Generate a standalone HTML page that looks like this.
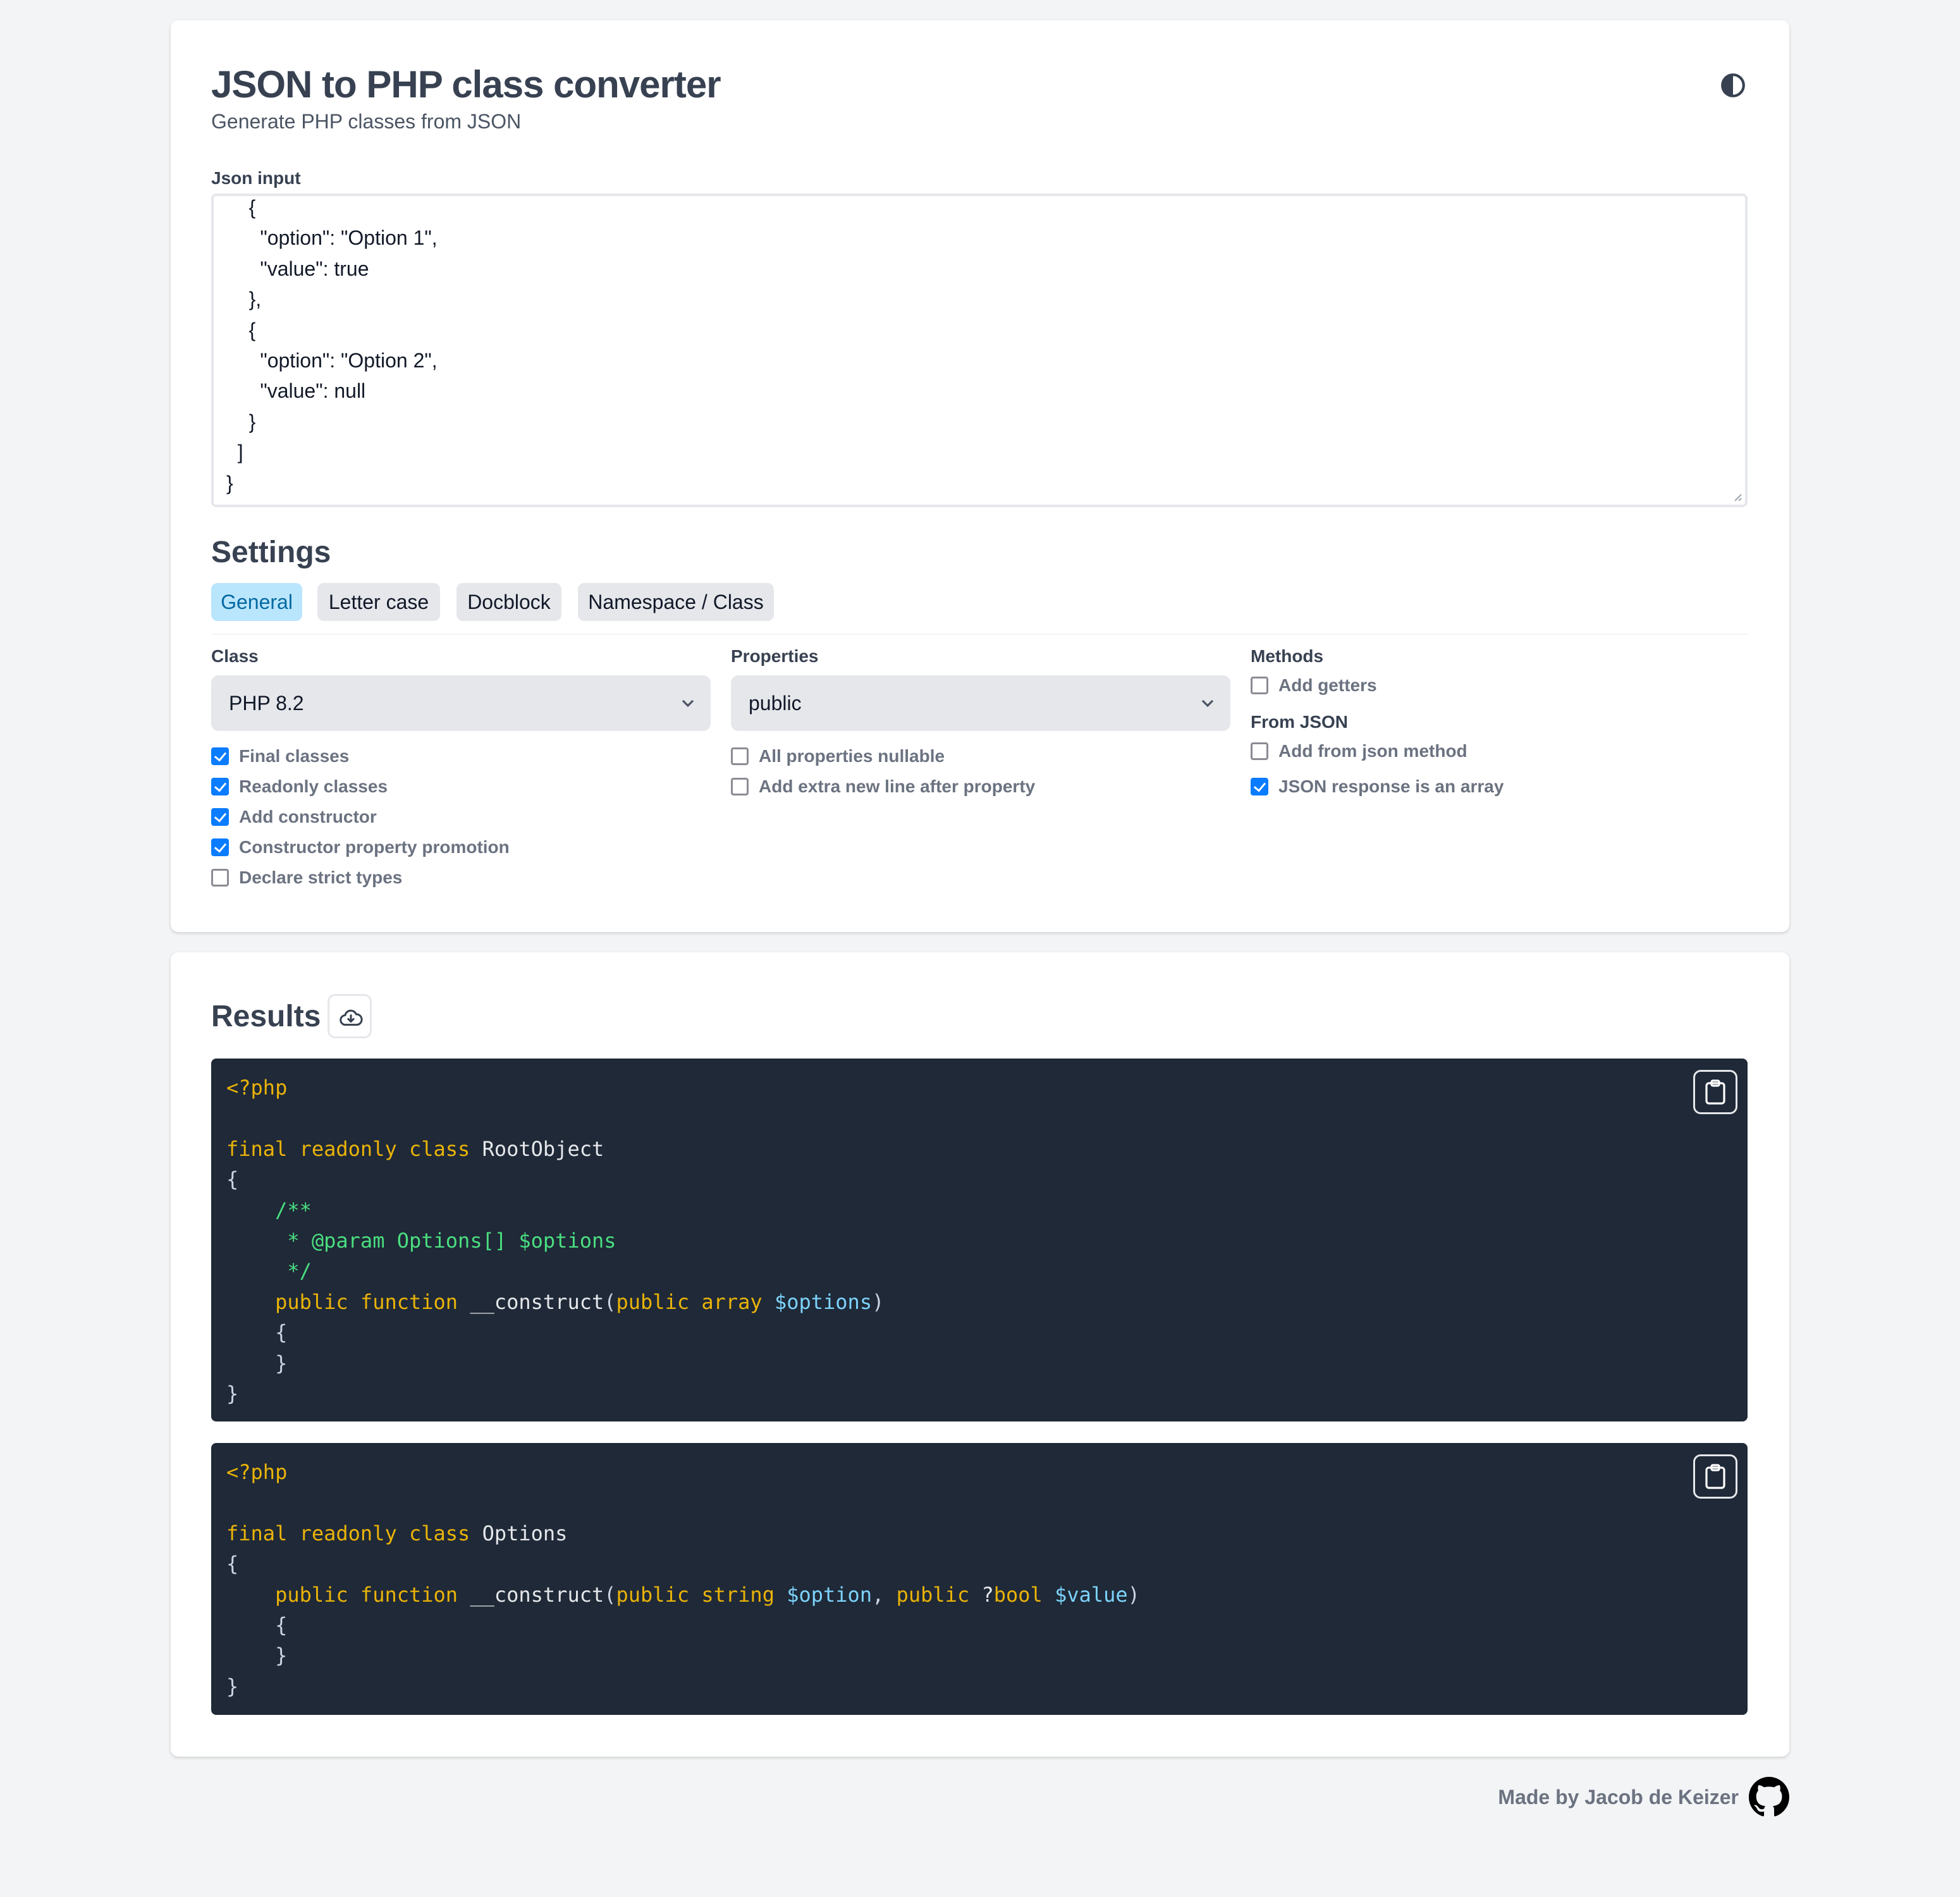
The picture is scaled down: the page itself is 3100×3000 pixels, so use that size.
<!DOCTYPE html>
<html><head><meta charset="utf-8"><style>
html{zoom:2}
*{box-sizing:border-box;margin:0;padding:0}
body{width:1550px;height:1500px;background:#f3f4f6;font-family:"Liberation Sans",sans-serif;color:#374151;position:relative;overflow:hidden}
.a{position:absolute;white-space:pre}
.card{position:absolute;left:135px;width:1280px;background:#fff;border-radius:6px;box-shadow:0 1px 3px rgba(0,0,0,.1),0 1px 2px rgba(0,0,0,.06)}
.lbl{font-size:14px;font-weight:bold;line-height:20px;color:#374151}
.tab{position:absolute;top:461px;height:30px;line-height:30px;font-size:16px;background:#e5e7eb;border-radius:5px;text-align:center;color:#111827}
.sel{position:absolute;top:534px;height:44px;width:395px;background:#e5e7eb;border-radius:6px;font-size:16px;line-height:44px;padding-left:14px;color:#111827}
.sel svg{position:absolute;right:12px;top:16px}
.cb{position:absolute;font-size:14px;font-weight:bold;color:#6b7280;line-height:20px;padding-left:22px;white-space:pre}
.cb:before{content:"";position:absolute;left:0;top:3px;width:14px;height:14px;border:1.5px solid #8b8b94;border-radius:2px;box-sizing:border-box;background:#fff}
.cb.on:before{background:#0a7cff;border-color:#0a7cff}
.cb.on:after{content:"";position:absolute;left:4.5px;top:5px;width:4px;height:7px;border:solid #fff;border-width:0 1.8px 1.8px 0;transform:rotate(40deg)}
.code{position:absolute;left:167px;width:1215px;background:#1f2937;border-radius:4px;font-family:"DejaVu Sans Mono","Liberation Mono",monospace;font-size:16px;line-height:24.2px;color:#e5e7eb;padding:11px 12px;white-space:pre}
.k{color:#eab308}.c{color:#4ade80}.v{color:#7dd3fc}.p{color:#cbd5e1}
.copy{position:absolute;right:8px;top:9px;width:35px;height:35px;border:1.5px solid #e5e7eb;border-radius:6px}
.copy svg{position:absolute;left:7px;top:6px}
</style></head><body>
<div class="card" style="top:16px;height:721px"></div>
<div class="card" style="top:753px;height:636px"></div>

<div class="a" style="left:167px;top:48px;font-size:30px;font-weight:bold;line-height:38px;color:#374151;letter-spacing:-0.5px">JSON to PHP class converter</div>
<div class="a" style="left:167px;top:84px;font-size:16px;line-height:24px;color:#4b5563">Generate PHP classes from JSON</div>
<svg class="a" style="left:1360px;top:57px" width="21" height="21" viewBox="0 0 20 20"><circle cx="10" cy="10" r="9" fill="#374151"/><path d="M10 3a7 7 0 0 1 0 14z" fill="#fff"/></svg>

<div class="a lbl" style="left:167px;top:131px">Json input</div>
<div class="a" style="left:167px;top:153px;width:1215px;height:248px;border:2px solid #e5e7eb;border-radius:4px;overflow:hidden">
<div class="a" style="left:10px;top:-3px;font-size:16px;line-height:24.2px;color:#111827">    {
      "option": "Option 1",
      "value": true
    },
    {
      "option": "Option 2",
      "value": null
    }
  ]
}</div>
<svg class="a" style="right:2px;bottom:2px" width="7" height="7"><path d="M6 1L1 6M6 4L4 6" stroke="#9ca3af"/></svg>
</div>

<div class="a" style="left:167px;top:422px;font-size:24px;font-weight:bold;line-height:30px">Settings</div>
<div class="tab" style="left:167px;width:72px;background:#bae6fd;color:#0369a1">General</div>
<div class="tab" style="left:251px;width:97px">Letter case</div>
<div class="tab" style="left:361px;width:83px">Docblock</div>
<div class="tab" style="left:457px;width:155px">Namespace / Class</div>
<div class="a" style="left:167px;top:501px;width:1215px;height:1px;background:#f3f4f6"></div>

<div class="a lbl" style="left:167px;top:509px">Class</div>
<div class="a lbl" style="left:578px;top:509px">Properties</div>
<div class="a lbl" style="left:989px;top:509px">Methods</div>
<div class="sel" style="left:167px">PHP 8.2<svg width="12" height="12" viewBox="0 0 12 12"><path d="M2 4l4 4 4-4" fill="none" stroke="#4b5563" stroke-width="1.6"/></svg></div>
<div class="sel" style="left:578px">public<svg width="12" height="12" viewBox="0 0 12 12"><path d="M2 4l4 4 4-4" fill="none" stroke="#4b5563" stroke-width="1.6"/></svg></div>

<div class="cb on" style="left:167px;top:588px">Final classes</div>
<div class="cb on" style="left:167px;top:612px">Readonly classes</div>
<div class="cb on" style="left:167px;top:636px">Add constructor</div>
<div class="cb on" style="left:167px;top:660px">Constructor property promotion</div>
<div class="cb" style="left:167px;top:684px">Declare strict types</div>
<div class="cb" style="left:578px;top:588px">All properties nullable</div>
<div class="cb" style="left:578px;top:612px">Add extra new line after property</div>
<div class="cb" style="left:989px;top:532px">Add getters</div>
<div class="a lbl" style="left:989px;top:561px">From JSON</div>
<div class="cb" style="left:989px;top:584px">Add from json method</div>
<div class="cb on" style="left:989px;top:612px">JSON response is an array</div>

<div class="a" style="left:167px;top:789px;font-size:24px;font-weight:bold;line-height:30px">Results</div>
<div class="a" style="left:259px;top:786px;width:35px;height:35px;border:1.5px solid #e5e7eb;border-radius:6px">
<svg class="a" style="left:7px;top:7px" width="20" height="20" viewBox="0 0 24 24" fill="none" stroke="#374151" stroke-width="1.8" stroke-linecap="round" stroke-linejoin="round"><path d="M7 19a4.5 4.5 0 0 1-.5-9A5.5 5.5 0 0 1 17 9a4 4 0 0 1 .5 10z"/><path d="M12 10v6m-2.5-2.5L12 16l2.5-2.5"/></svg></div>

<div class="code" style="top:837px;height:287px"><span class="k">&lt;?php</span>

<span class="k">final readonly class</span> RootObject
<span class="p">{</span>
    <span class="c">/**</span>
<span class="c">     * @param Options[] $options</span>
<span class="c">     */</span>
    <span class="k">public function</span> __construct<span class="p">(</span><span class="k">public array</span> <span class="v">$options</span><span class="p">)</span>
    <span class="p">{</span>
    <span class="p">}</span>
<span class="p">}</span><div class="copy"><svg width="18" height="20" viewBox="0 0 18 20" fill="none" stroke="#fff" stroke-width="1.6"><rect x="2" y="3" width="14" height="16" rx="2"/><rect x="6" y="1" width="6" height="4" rx="1"/></svg></div></div>

<div class="code" style="top:1141px;height:215px"><span class="k">&lt;?php</span>

<span class="k">final readonly class</span> Options
<span class="p">{</span>
    <span class="k">public function</span> __construct<span class="p">(</span><span class="k">public string</span> <span class="v">$option</span><span class="p">,</span> <span class="k">public</span> ?<span class="k">bool</span> <span class="v">$value</span><span class="p">)</span>
    <span class="p">{</span>
    <span class="p">}</span>
<span class="p">}</span><div class="copy"><svg width="18" height="20" viewBox="0 0 18 20" fill="none" stroke="#fff" stroke-width="1.6"><rect x="2" y="3" width="14" height="16" rx="2"/><rect x="6" y="1" width="6" height="4" rx="1"/></svg></div></div>

<div class="a" style="right:175px;top:1411px;font-size:16px;font-weight:bold;line-height:20px;color:#6b7280">Made by Jacob de Keizer</div>
<svg class="a" style="left:1383px;top:1405px" width="32" height="32" viewBox="0 0 16 16"><path fill="#000" d="M8 0C3.580 0 0 3.58 0 8c0 3.54 2.290 6.53 5.470 7.59.4.07.55-.17.55-.38 0-.19-.01-.82-.01-1.49-2.010.37-2.530-.49-2.690-.94-.09-.23-.48-.94-.82-1.130-.28-.15-.68-.52-.01-.53.63-.01 1.080.58 1.230.82.72 1.210 1.870.87 2.330.66.07-.52.28-.87.51-1.070-1.780-.2-3.640-.89-3.640-3.950 0-.87.31-1.590.82-2.150-.08-.2-.36-1.020.08-2.120 0 0 .67-.21 2.200.82.64-.18 1.320-.27 2-.27.68 0 1.360.09 2 .27 1.530-1.040 2.200-.82 2.200-.82.44 1.100.16 1.920.08 2.120.51.56.82 1.270.82 2.150 0 3.070-1.870 3.750-3.650 3.950.29.25.54.73.54 1.480 0 1.070-.01 1.930-.01 2.200 0 .21.15.46.55.38A8.013 8.013 0 0016 8c0-4.420-3.580-8-8-8z"/></svg>
</body></html>
